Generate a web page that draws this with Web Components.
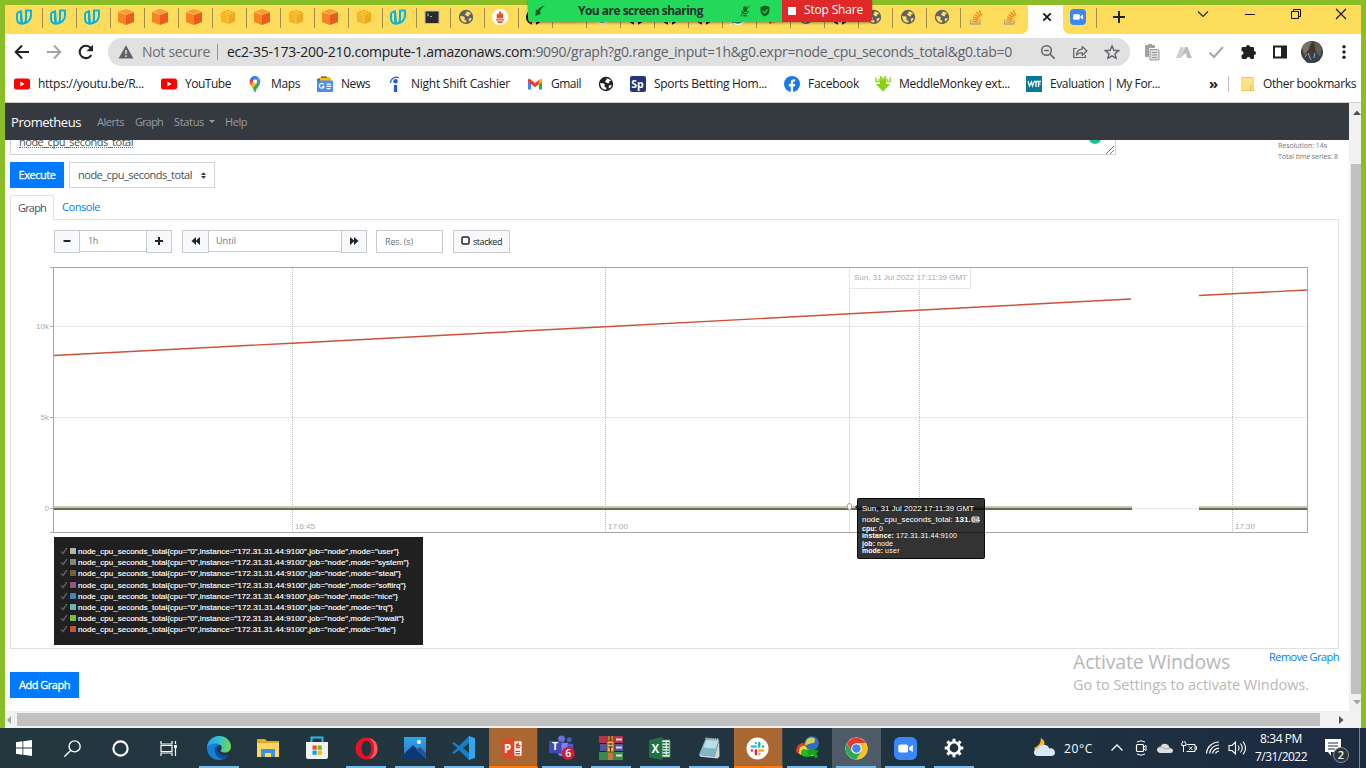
<!DOCTYPE html>
<html lang="en">
<head>
<meta charset="utf-8">
<title>Prometheus Time Series</title>
<style>
body{margin:0;width:1366px;height:768px;overflow:hidden;font-family:"Open Sans","Noto Sans",sans-serif;font-size:12px;color:#212529}
</style>
</head>
<body>
<desktop-screen></desktop-screen>
<script>
const define=(name,css,html,init)=>customElements.define(name,class extends HTMLElement{
  constructor(){super();this.attachShadow({mode:'open'});}
  connectedCallback(){
    if(this.ready)return;this.ready=true;
    const t=document.createElement('template');
    t.innerHTML='<style>:host{display:block;box-sizing:border-box}*{box-sizing:border-box}'+css+'</style>'+(typeof html==='function'?html(this):html);
    this.shadowRoot.append(t.content.cloneNode(true));
    if(init)init(this);
  }
});

/* Text run tracked to a given advance width */
define('fit-text',':host{display:inline-block;white-space:pre;flex:none}span{display:inline-block}','<span><slot></slot></span>',el=>{
  const w=+el.getAttribute('w'),s=el.shadowRoot.querySelector('span');
  const n=el.textContent.length,nat=s.getBoundingClientRect().width;
  if(w&&nat){s.style.letterSpacing=((w-nat)/n)+'px';el.style.width=w+'px';}
});

const svg=(w,h,body)=>[w,h,body];
const cube=(a,b,c)=>`<path fill="${a}" d="M8 0l7.500 2.600-7.500 2.800L.5 2.600z"/><path fill="${b}" d="M0 3l8 3V16L0 13z"/><path fill="${c}" d="M16 3L8 6V16l8-3z"/>`;
const globe=c=>`<circle cx="8" cy="8" r="7.2" fill="${c}"/><path fill="#fff" class="land" d="M2.2 7c2.5.2 4 .3 4.500 1.400.3 1.100-.6 1.200-.2 2.100.6 1.300 1.700.4 2 1.700.1 1-.8 1.300-1.200 1.500A6 6 0 0 1 2.200 7zM8.500 2.400c1.700-.2 4 .9 4.700 2.600-1-.2-1.600-.1-2 .6-.3.700.4 1.200-.4 1.700-1.300.5-1.400-.8-2.700-.8C6.700 6.300 7 5 7.700 4.600c.7-.5.900-.9.800-2.200z M11 9.500l2.600-.8c-.2 1.600-1 2.900-2.200 3.900-.8-.8-.9-1.900-.4-3.100z"/>`;
const yt='<rect x="0" y="2.500" width="16" height="11" rx="2.300" fill="#f00"/><path d="M6.400 5.500v5l4.200-2.500z" fill="#fff"/>';
const zoomI='<rect width="16" height="16" rx="4" fill="#3b87f7"/><rect x="3" y="5.200" width="6.800" height="5.600" rx="1.300" fill="#fff"/><path d="M10.500 7.300l2.600-1.800v5l-2.600-1.800z" fill="#fff"/>';
const slackBits='<g stroke-width="3.300" stroke-linecap="round" fill="none"><path stroke="#36c5f0" d="M8.800 8.300H3.300M8.800 3.300v.1"/><path stroke="#2eb67d" d="M13.300 3.300v5M18.500 8.300v.1"/><path stroke="#ecb22e" d="M13.300 13.500h5.400M13.300 18.600v.1"/><path stroke="#e01e5a" d="M8.800 13.500v5.200M3.300 13.500v.1"/></g>';
const ICONS={
 udacity:svg(16,16,'<path d="M1 4.200v5c0 3.500 2 5.500 4.800 5.500 2.700 0 4.200-1.900 4.200-4.800V1.400h5v5.300c0 4.200-3.600 7.800-9.200 8M6 14.300c-.8-1-1-2-1-3.600V2zM1 4.200L5 2.200" fill="none" stroke="#06b3e3" stroke-width="2" stroke-linejoin="round"/>'),
 cube:svg(16,16,cube('#fb9a3a','#f68422','#e85c1f')),
 box:svg(16,16,'<g transform="translate(.8 .8) scale(.9)">'+cube('#f5a80f','#f5b52e','#edab22')+'<path d="M4.500 1.300l7 2.800M11.500 1.300l-7 2.800M8 6v10" stroke="#ffdd5c" stroke-width=".8"/></g>'),
 term:svg(16,16,'<rect x="1" y="2" width="14" height="12.500" fill="#2a2a2a" stroke="#bbb" stroke-width="1"/><path d="M3 4.500l2 1.300-2 1.300M6 7.500h2" stroke="#ccc" stroke-width=".8" fill="none"/>'),
 globe:svg(16,16,globe('#5f6368')),
 globeb:svg(16,16,globe('#202124')),
 prom:svg(16,16,'<circle cx="8" cy="8" r="8" fill="#fff"/><path fill="#e6522c" d="M8 1.500c1.400 1.800.8 2.500 1.700 3.500.2-.6.2-1.200 0-1.700 1.800 2 2 3.700 1.200 6.200H5.100c-.9-2.400-.5-4.300.6-5.600.2 1 .4 1.300.8 1.600C7.200 4.300 6.900 3.100 8 1.500zM4 10.200h8v1.300H4zM5 12.200h6c0 1-1.200 2-3 2s-3-1-3-2z"/>'),
 git:svg(16,16,'<path fill="#191717" d="M8 0a8 8 0 0 0-2.500 15.600c.4.100.5-.2.500-.4v-2c-2.500.4-3-1-3-1-.4-.9-1-1.200-1-1.200 1.500 0 1.900 1.300 1.900 1.300.7 1 1.700.8 2.200.6l.5-1.100C3.200 11.300 3.300 8 3.300 7.500c0-.9.300-1.600.9-2.200-.3-1-.1-1.900.1-2.100 1 0 2 .8 2.200.9a8 8 0 0 1 3.200 0c1-.8 2-.9 2.200-.9.200.5.300 1.200.1 2 1.700 2.300.5 5.700-2.600 6.200.5.500.6 1 .6 2v1.800c0 .2.100.5.500.4A8 8 0 0 0 8 0z"/>'),
 line:svg(16,16,'<rect x="0" y="12.500" width="16" height="1" fill="#f5b34c"/>'),
 green:svg(16,16,'<circle cx="8" cy="8" r="7.500" fill="#eee"/><circle cx="8" cy="7.800" r="6" fill="#139a63"/>'),
 wa:svg(16,16,'<path d="M0 16l1.200-4A8 8 0 1 1 4 15z" fill="#fff"/><path d="M1.500 14.500l.9-3A6.500 6.500 0 1 1 4.600 13.700z" fill="#25b95c"/><path d="M5 5c0 3 3 6 6 6l.5-1.600-2-1-1 1C7.500 9 6.700 8 6.400 7.200l.9-.9-.8-1.700z" fill="#fff"/>'),
 slack:svg(22,22,slackBits),
 so:svg(16,16,'<path d="M2.500 10.500v4.500h9.500v-4.500" fill="none" stroke="#aaa294" stroke-width="1.300"/><path d="M4.300 12.800h6M4.500 10.600l5.900.6M5.100 8.200l5.700 1.600M6.400 5.500l5 3M8.500 3l4 4.500M11.300 1.200l2.400 5.300" stroke="#f48024" stroke-width="1.200"/>'),
 zoom:svg(16,16,zoomI),
 close:svg(16,16,'<path d="M4.300 4.300l7.400 7.400M11.700 4.300l-7.400 7.400" stroke="#111" stroke-width="1.700"/>'),
 plus:svg(16,16,'<path d="M8 2v12M2 8h12" stroke="#222" stroke-width="2"/>'),
 chev:svg(16,16,'<path d="M3 5.500l5 5 5-5" fill="none" stroke="#222" stroke-width="1.100"/>'),
 min:svg(16,16,'<path d="M3 8.500h10" stroke="#111"/>'),
 max:svg(16,16,'<path d="M3.500 5.500h7v7h-7zM5.500 5.500v-2h7v7h-2" fill="none" stroke="#111"/>'),
 x:svg(16,16,'<path d="M3 3l10 10M13 3L3 13" stroke="#111" stroke-width="1.100"/>'),
 back:svg(16,16,'<path d="M15 8H2M8 1.500L1.700 8 8 14.500" fill="none" stroke="#202124" stroke-width="2"/>'),
 fwd:svg(16,16,'<path d="M1 8h13M8 1.500L14.300 8 8 14.500" fill="none" stroke="#a5a5a5" stroke-width="2"/>'),
 reload:svg(16,16,'<path d="M13.300 11A6.200 6.200 0 1 1 12.700 4" fill="none" stroke="#202124" stroke-width="2.100"/><path d="M15 .8v6.400H8.500z" fill="#202124"/>'),
 warn:svg(16,16,'<path d="M8 1.200L15.500 14.500H.5z" fill="#5f6368"/><path d="M8 6v4M8 11.300v1.600" stroke="#e1e1e1" stroke-width="1.500"/>'),
 mag:svg(16,16,'<circle cx="6.500" cy="6.500" r="4.800" fill="none" stroke="#5f6368" stroke-width="1.500"/><path d="M10 10l4.600 4.600M4.200 6.500h4.600" stroke="#5f6368" stroke-width="1.500"/>'),
 share:svg(16,16,'<path d="M4.500 4.500H1.700v9h11.600V11" fill="none" stroke="#5f6368" stroke-width="1.200"/><path d="M4.500 11c.3-3.600 2-5.500 5.700-5.800V2.500L15 7l-4.800 4.300V8.700C7.500 8.700 6 9.300 4.500 11z" fill="none" stroke="#5f6368" stroke-width="1.200" stroke-linejoin="round"/>'),
 star:svg(16,16,'<path d="M8 1.900l1.900 4.400 4.700.4-3.600 3.100 1.100 4.600L8 11.900l-4.100 2.500L5 9.800 1.400 6.700l4.700-.4z" fill="none" stroke="#5f6368" stroke-width="1.400"/>'),
 paste:svg(18,18,'<path d="M2 2h3V1h4v1h3v3H6v9H2z" fill="#a2a2a2"/><path d="M7 6.500h7.500L16 8v9H7z" fill="#ddd" stroke="#999"/><path d="M9 9.500h5M9 12h5M9 14.500h5" stroke="#999"/>'),
 tent:svg(16,16,'<path d="M0 14L4.500 3h2.500l1 3L5 14z" fill="#cfcfcf"/><path d="M16 14L11.500 3H9L5.500 13l2.500-2.500L10 9l1 5z" fill="#bcbcbc"/>'),
 check:svg(16,16,'<path d="M1.500 8.500l4.500 4.500L15 3" fill="none" stroke="#a7a7a7" stroke-width="2"/>'),
 puzzle:svg(16,16,'<path fill="#202124" d="M6 3a2 2 0 0 1 4 0h3a1 1 0 0 1 1 1v3a2 2 0 0 1 0 4v3a1 1 0 0 1-1 1h-2.500a2 2 0 0 0-4 0H3a1.500 1.500 0 0 1-1.500-1.500v-2.500a2 2 0 0 0 0-4V4.500C1.500 3.500 2 3 3 3z"/>'),
 side:svg(16,16,'<path d="M1 1.500h14v13H1zM3 3.500v9h6v-9z" fill="#202124" fill-rule="evenodd"/>'),
 avatar:svg(22,22,'<circle cx="11" cy="11" r="11" fill="#3b3f3a"/><path d="M1 6Q5 0 11 .2L8 8 3 14z" fill="#77736a"/><path d="M13 1q6 1 8 7l-2 8-5-7z" fill="#5c6155"/><ellipse cx="11.500" cy="7" rx="3" ry="4" fill="#4a3329"/><path d="M5 21l2-9 5-1 5 3 2 5q-7 5-14 2z" fill="#35404c"/><path d="M7 12l3 7M14 12l-1 5M4 16l2-3" stroke="#a3a6a8" stroke-width="1"/>'),
 dots:svg(16,16,'<g fill="#202124"><circle cx="8" cy="2.800" r="1.700"/><circle cx="8" cy="8" r="1.700"/><circle cx="8" cy="13.200" r="1.700"/></g>'),
 yt:svg(16,16,yt),
 maps:svg(16,16,'<path fill="#34a853" d="M3.500 8.500c1.500 2.500 3 3.700 3.700 7 .3.700 1.200.7 1.500 0 .7-3.500 3.500-4.600 4.400-8.500L12 4z"/><path fill="#fbbc04" d="M3.800 9l5.500-6.500L12 5 6.200 12z"/><path fill="#4285f4" d="M5 9.500L11.800 2C13.500 3.300 14 6 12.500 8L8 6z" opacity=".9"/><path fill="#ea4335" d="M3.200 3.500L6 6 2.700 6z"/><path fill="#1a73e8" d="M4 2C5.300.3 7 0 8.500 0L5.500 5 3.500 3z"/><path fill="#4285f4" d="M8 0c2 0 3.300.8 4 2L9 4.500 6 3.500z"/><path fill="#ea4335" d="M3.500 2.600L7 5l-3.500 4C2.600 7 2.200 4.500 3.500 2.600z"/><circle cx="8" cy="5.500" r="2" fill="#fff"/>'),
 news:svg(16,16,'<path fill="#ea4335" d="M4 0l10 2v5H4z"/><path fill="#0c9d58" d="M0 3L9 0l2 5H0z"/><path fill="#fbbc04" d="M3 2h11v5H3z"/><rect y="4.500" width="16" height="11.500" rx="1" fill="#4b8bf5"/><path d="M6.800 8.600A2.400 2.400 0 1 0 7 10.600H5M9.500 8.200h4.500M9.500 10.400h5M9.500 12.600h4" stroke="#fff" stroke-width="1.200" fill="none"/>'),
 night:svg(16,16,'<circle cx="8.500" cy="5.300" r="2.200" fill="#2557d6"/><path d="M8.500 9v7" stroke="#2557d6" stroke-width="3.200"/><path d="M3.500 7C3.700 2 8 .2 12 1.700" fill="none" stroke="#2557d6" stroke-width="1.200"/>'),
 gmail:svg(16,16,'<path d="M1 3.500V13.500h3V6z" fill="#4285f4"/><path d="M15 3.500v10h-3V6z" fill="#34a853"/><path d="M12 4l1-1c1-.6 2 .1 2 1.300v1.500L12 8.200z" fill="#fbbc04"/><path d="M1 4.200C1 3 2 2.300 3 3l5 3.900L12 4v4.300L8 11.300 1 6z" fill="#ea4335"/>'),
 sp:svg(16,16,'<rect width="16" height="16" rx="2" fill="#263577"/><text x="1.300" y="12" fill="#fff" font-family="Open Sans" font-weight="700" font-size="10.500">Sp</text>'),
 fb:svg(16,16,'<circle cx="8" cy="8" r="8" fill="#1877f2"/><path fill="#fff" d="M6.800 16v-5.500H4.800V8.100h2V6.400c0-2 1.100-3.100 2.900-3.100.8 0 1.500.1 1.500.1v2h-.9c-.9 0-1.200.6-1.200 1.200v1.500H11.200l-.4 2.400H9.100V16z"/>'),
 down:svg(16,16,'<path d="M5 0v8H.8L8 15.500 15.200 8H11V0H9.500v2h-3V0z" fill="#8bcf17"/><path d="M5.500 1.500h5v2h-5z" fill="#a8dd45"/><path d="M.8 1.500v4H4v-3M15.200 1.500v4H12v-3" fill="none" stroke="#9bd62b" stroke-width="1.400"/>'),
 wtf:svg(16,16,'<rect width="16" height="16" fill="#077a98"/><path d="M2 5l1.500 5L5.500 6l1 4 2-5M8 5.500h4M10 6v5M15 5.500h-2.500V11M12.500 8.200h2" stroke="#fff" stroke-width="1.300" fill="none"/>'),
 folder:svg(16,16,'<path d="M2 1.500h11v13H2z" fill="#ffe389" stroke="#edc759"/><path d="M10.500 14.500V10h2.500v4.500z" fill="#ffe9a3" stroke="#e8bd47"/>'),
 win:svg(16,16,'<path fill="#fff" d="M0 2.200L6.500 1.300v6.300H0zM7.300 1.200L16 0v7.600H7.300zM0 8.400h6.500v6.300L0 13.800zM7.300 8.400H16V16l-8.700-1.200z"/>'),
 search:svg(16,16,'<circle cx="10" cy="6" r="5.200" fill="none" stroke="#fff" stroke-width="1.300"/><path d="M6.200 9.800L.4 15.600" stroke="#fff" stroke-width="1.400"/>'),
 ring:svg(16,16,'<circle cx="8" cy="8" r="6.700" fill="none" stroke="#fff" stroke-width="2"/>'),
 task:svg(17,17,'<path d="M1 1v3h11V1M1 16v-3h11v3M1 5.500h11v6H1zM15.500 1v3M15.500 8v8" fill="none" stroke="#fff" stroke-width="1.200"/><path d="M14 5h3v3h-3z" fill="#fff"/>'),
 edge:svg(24,24,'<defs><linearGradient id="e"><stop stop-color="#279fe4"/><stop offset=".5" stop-color="#35c1d4"/><stop offset="1" stop-color="#6fdc48"/></linearGradient></defs><path d="M12 0a12 12 0 1 0 0 24q5 0 9-4-5 1-8-1t-3-6q0-3 2-4l10 1q-2-10-10-10z" fill="#1480d8"/><path d="M0 11C1 4 6 0 12 0c7 0 12 5 12 10.500 0 4-3 6-6 6-3.500 0-5-1-4-2.500 2-2.500 0-6.500-4-6.500C6 7 2 8.500 0 11z" fill="url(#e)"/><path d="M9 10c-3 3-1 12 6 13 3-1 5-2 6.500-4-2 .6-5 .4-7-.6-4-2-5.500-5.400-4.500-9z" fill="#104a9d"/>'),
 files:svg(22,20,'<path d="M0 1h8l2 2h12v15H0z" fill="#e9a91b"/><path d="M0 5h22v14H0z" fill="#ffd766"/><path d="M4 11h14v8h-4v-4H8v4H4z" fill="#3c91db"/>'),
 store:svg(24,24,'<path d="M6.500 7V1.500h11V7" fill="none" stroke="#2fb7ea" stroke-width="2"/><path d="M1 6h22v15q0 2-2 2H3q-2 0-2-2z" fill="#f2f2f2"/><path d="M7.500 9.500h4.200v4.200H7.500z" fill="#f25022"/><path d="M12.600 9.500h4.200v4.200h-4.200z" fill="#7fba00"/><path d="M7.500 14.600h4.200v4.200H7.500z" fill="#00a4ef"/><path d="M12.600 14.600h4.200v4.200h-4.200z" fill="#ffb900"/>'),
 opera:svg(24,24,'<path fill-rule="evenodd" fill="#e81224" d="M12 .500a11.500 11.500 0 1 0 0 23 11.500 11.500 0 0 0 0-23zM12 4c3 0 5 3.500 5 8s-2 8-5 8-5-3.500-5-8 2-8 5-8z"/><path d="M15 1q8 2 8.500 11T15 23q5-4 5-11T15 1z" fill="#fa5a5e"/>'),
 photos:svg(22,22,'<defs><linearGradient id="p" x2="0" y2="1"><stop stop-color="#26a8ee"/><stop offset="1" stop-color="#3d6fc0"/></linearGradient></defs><path d="M0 0h22v22H0z" fill="url(#p)"/><path d="M0 17L9 8l13 14H0z" fill="#0d3977"/><path d="M12 13l4-3 6 6v6z" fill="#285199"/><circle cx="15" cy="5" r="2" fill="#fff"/>'),
 code:svg(24,24,'<path d="M17 0l6 2.500v19L17 24 7 14l-5 4-2-1.500L5.500 12 0 7.500 2 6l5 4zM17 7l-6 5 6 5z" fill="#1480cc" fill-rule="evenodd"/><path d="M17 0l6 2.500v19L17 24z" fill="#34a6ee"/>'),
 ppt:svg(24,24,'<path d="M12 4h10v16H12z" fill="#fff" stroke="#d24726"/><path d="M15 15h5M15 17.500h5M16.500 7v4h3.500M18 6v3h2.500" stroke="#d24726" stroke-width="1.500" fill="none"/><path d="M0 3l14-3v24L0 21z" fill="#dc4a2c"/><text x="3" y="16.500" fill="#fff" font-family="Open Sans" font-weight="700" font-size="12">P</text>'),
 teams:svg(28,26,'<circle cx="13" cy="4" r="3.600" fill="#6d73d6"/><circle cx="21" cy="5" r="2.600" fill="#5059c9"/><path d="M7 8h13v10q-4 6-10 3z" fill="#7b83eb"/><path d="M19 9h6v6q-1 4-6 4z" fill="#5059c9"/><path d="M0 6h13v13H0z" fill="#4048b2"/><text x="3" y="16" fill="#fff" font-family="Open Sans" font-weight="700" font-size="11">T</text><circle cx="20" cy="19" r="6.800" fill="#d01c3c"/><text x="16.800" y="23" fill="#fff" font-family="Open Sans" font-weight="600" font-size="11">6</text>'),
 rar:svg(24,24,'<path d="M0 0h24v7H0z" fill="#b6314d"/><path d="M1 8h23v7H1z" fill="#5055a2"/><path d="M0 16h24v8H0z" fill="#388b4d"/><path d="M17 3.500h6M17 11.500h6M17 19.500h6" stroke="#ddd" stroke-width="2"/><path d="M1 7.500h23M0 15.500h24" stroke="#222" stroke-width="1"/><path d="M9 0h5v24H9z" fill="#c37b35"/><path d="M8 5h7v11H8z" fill="#e5bd5d" stroke="#70461d"/><path d="M11.500 0v5M9.500 8h4M9.500 11h4M11.500 12v4" stroke="#633915" stroke-width="1.300"/>'),
 excel:svg(24,24,'<path d="M12 3h10v18H12z" fill="#fff" stroke="#207245"/><path d="M14 6h7M14 9h7M14 12h7M14 15h7M14 18h7" stroke="#207245" stroke-width="1.700"/><path d="M18 4v16" stroke="#fff"/><path d="M0 3l14-3v24L0 21z" fill="#207245"/><text x="2.500" y="16.500" fill="#fff" font-family="Open Sans" font-weight="700" font-size="12">X</text>'),
 note:svg(24,24,'<path d="M8 1.500l14 1-4.500 18L1 18.500z" fill="#7fb5c5"/><path d="M8.500 3l12.500 1-2.500 8-13-1z" fill="#bcdfe6"/><path d="M8 1.300l14 1" stroke="#e5e5e5" stroke-width="1.500" stroke-dasharray="1 1"/><path d="M1 18.500l16.500 2L22 3l.5 17-2 2.500-18-2z" fill="#d6d6d6"/>'),
 slackc:svg(24,24,'<circle cx="12" cy="12" r="11.500" fill="#fff"/><g transform="translate(3.600 3.600) scale(.77)">'+slackBits+'</g>'),
 idm:svg(26,24,'<path d="M1 15q1-8 9-8 7 0 13 13l-6 1Q13 12 9 12q-5 0-4 7-4-1-4-4z" fill="#e53929"/><path d="M4 17q0-7 6-7 6 1 10 10l-4 1q-3-6-6-6-4 0-3 5-3-1-3-3z" fill="#f7df2b"/><path d="M6 18q1-6 5-4 4 2 5 7Q7 23 6 18z" fill="#1bbb2a"/><circle cx="17.500" cy="7.500" r="7.300" fill="#2f6fc0"/><path d="M13 3q4-3 8 0l-1 4-5 1-4 2q-1-4 2-7z" fill="#cfd25a"/><path d="M12 14l13 1-3 3 2 4-3 1-3-4-3 3z" fill="#10a818"/>'),
 chrome:svg(24,24,'<circle cx="12" cy="12" r="11.500" fill="#fff"/><path d="M2 6.500A11.500 11.500 0 0 1 22 6.500H12L7 15z" fill="#e33b2e"/><path d="M22 6.500A11.500 11.500 0 0 1 12 23.500l5-8.500-5-8.500z" fill="#fbc116"/><path d="M12 23.500A11.500 11.500 0 0 1 2 6.500l5 8.500h10z" fill="#2da94f"/><circle cx="12" cy="12" r="5.500" fill="#fff"/><circle cx="12" cy="12" r="4.400" fill="#4285f4"/>'),
 gear:svg(20,20,'<circle cx="10" cy="10" r="5.700" fill="none" stroke="#fff" stroke-width="2.600"/><path d="M10 .7v4M10 15.300v4M.7 10h4M15.300 10h4M3.400 3.400l2.800 2.800M13.800 13.800l2.800 2.800M3.400 16.600l2.800-2.800M13.800 6.200l2.800-2.800" stroke="#fff" stroke-width="3"/>'),
 weather:svg(22,20,'<path d="M7 0q6 3 3 9L2 13Q-1 10 1 10 8 7 7 0z" fill="#ffb61e"/><path d="M4 19a4 4 0 0 1 0-8q2-4 6-4 5 0 6 4 5-1 6 4 0 4-4 4z" fill="#d9e7f6"/>'),
 up:svg(16,16,'<path d="M2.500 10.500L8 5l5.500 5.500" fill="none" stroke="#fff" stroke-width="1.300"/>'),
 meet:svg(16,16,'<rect x="3.500" y="4.500" width="7" height="7" rx="1" fill="none" stroke="#fff" stroke-width="1.200"/><path d="M11 7l2-1.500v5L11 9M4 2q4-2.500 8 0M4 14q4 2.500 8 0" fill="none" stroke="#fff"/>'),
 cloud:svg(16,16,'<path d="M3 13q-3-1-3-3.500T3.500 7Q5 3 9 4q3 .5 3.500 4Q16 8 16 11q0 2-2.500 2z" fill="#ddd"/><path d="M2 7q4-1 6 2l5-1" stroke="#aaa" fill="none"/>'),
 batt:svg(16,16,'<path d="M5.500 4.500H14v7H5.500M14.500 6.500h1v3h-1M8 6.500l3.500 3.500M11.500 6.500L8 10M2.500 6v6M.8 3v2.500h4V3M1.700 1v2M4 1v2" fill="none" stroke="#fff"/>'),
 wifi:svg(16,16,'<path d="M1.500 13.500A12.500 12.500 0 0 1 14 2M4.500 13.500A9.500 9.500 0 0 1 14 5M7.500 13.500A6 6 0 0 1 14 8.500M10.500 13.500q.5-2 3.500-2.500" fill="none" stroke="#fff" stroke-width="1.200"/>'),
 vol:svg(18,16,'<path d="M1 5.500h3L7.500 2v12L4 10.500H1zM10 5.500q2 2.500 0 5M12.500 3.500q3.500 4.500 0 9M15 1.500q5 6.500 0 13" fill="none" stroke="#fff" stroke-width="1.100"/>'),
 notif:svg(24,24,'<path d="M0 0h16v13H6v4l-3-4H0z" fill="#fff"/><path d="M3 4h10M3 7h10M3 10h7" stroke="#203040" stroke-width="1.200"/><circle cx="16" cy="16" r="7.500" fill="#2d3339" stroke="#899"/><text x="12.700" y="20" font-family="Open Sans" font-size="11" font-weight="600" fill="#fff">2</text>'),
 pull:svg(16,16,'<path d="M15 1Q7 2 5 7L2.500 6 2 15l8-4-2.500-1.500Q9 4 15 1z" fill="#0b5d20"/>'),
 mic:svg(16,16,'<rect x="5.500" y="1.500" width="5" height="8" rx="2.500" fill="#0b5d20"/><path d="M3.500 7.500q0 4 4.500 4t4.500-4M8 11.500V14M5 14.500h6M14 1L2 15" fill="none" stroke="#0b5d20" stroke-width="1.300"/>'),
 shield:svg(16,16,'<path d="M8 .8l6 2v5q0 5-6 7.500-6-2.500-6-7.500v-5z" fill="#0b5d20"/><path d="M5 8l2.500 2.500L11.500 6" stroke="#23d959" stroke-width="1.600" fill="none"/>')
};
define('ui-icon',':host{display:inline-flex;flex:none}svg{display:block}.land{fill:var(--land,#fff)}',el=>{
  const [w,h,b]=ICONS[el.getAttribute('n')],s=+el.getAttribute('s')||w;
  return `<svg width="${s}" height="${s*h/w}" viewBox="0 0 ${w} ${h}">${b}</svg>`;
});

const T=(w,t,c='')=>`<fit-text w="${w}" style="${c}">${t}</fit-text>`;
const I=(n,s='',c='')=>`<ui-icon n="${n}" s="${s}" style="${c}"></ui-icon>`;

const tabIcons=['udacity','udacity','udacity','cube','cube','cube','box','cube','box','cube','box','udacity','term','globe','prom','git','line','green','git','git','git','wa','slack','globe','git','globe','globe','globe','so','so'];
define('tab-strip',`:host{display:flex;height:29px;background:#ffdd5c;padding-left:3px;--land:#ffdd5c}
.t{width:34px;height:29px;padding:4px 0 0 8px;position:relative}
.t:not(.last):after{content:"";position:absolute;right:-1px;top:3px;width:1px;height:20px;background:#a08f4e}
.t.last{border-bottom-right-radius:7px;background:#ffdd5c}
.a{width:35px;background:#fff;display:flex;padding:4px 0 0 11px}
.edge{background:#fff;display:flex}
.z{width:34px;padding:4px 0 0 7px;border-bottom-left-radius:7px;background:#ffdd5c;height:29px;position:relative}
.z:after{content:"";position:absolute;right:0;top:3px;width:1px;height:20px;background:#a08f4e}
.w{display:flex;margin-left:auto}.w ui-icon{width:46px;justify-content:center;padding-top:1px}`,
 `${tabIcons.slice(0,29).map(n=>`<div class="t">${I(n,16)}</div>`).join('')}
 <div class="edge"><div class="t last">${I('so',16)}</div><div class="a">${I('close',16)}</div><div class="z">${I('zoom',16)}</div></div>${I('plus','','padding:4px 0 0 14px')}
 <div class="w">${I('chev','','position:relative;left:-4px')}${I('min','','position:relative;left:-3px')}${I('max','','position:relative;left:-3px')}${I('x','','width:39px;padding-right:2px')}</div>`);

define('tool-bar',`:host{display:flex;height:36px;background:#fff;align-items:center;padding-left:9px;font-size:14px;color:#202124}
.n{display:flex;gap:16px}.o{display:flex;align-items:center;width:1022px;height:28px;border-radius:14px;background:#e1e1e1;margin-left:14px;padding-left:10px;--lift:-1px}
.o fit-text{position:relative;top:-.5px}
.s{width:1px;height:16px;background:#969696;margin:0 9px 0 7px}.r{display:flex;gap:16px;margin-left:auto;padding-right:10px}
.e{display:flex;align-items:center}.e ui-icon{width:32px;justify-content:center}`,
 `<div class="n">${I('back')}${I('fwd')}${I('reload')}</div>
 <div class="o">${I('warn')}${T(68,'Not secure','margin-left:8px;color:#6a6d70')}<i class="s"></i>${T(305,'ec2-35-173-200-210.compute-1.amazonaws.com')}${T(480,':9090/graph?g0.range_input=1h&amp;g0.expr=node_cpu_seconds_total&amp;g0.tab=0','color:#5f6368')}
 <div class="r">${I('mag')}${I('share')}${I('star')}</div></div>
 <div class="e" style="margin-left:6px">${['paste','tent','check','puzzle','side','avatar','dots'].map(n=>I(n)).join('')}</div>`);

const marks=[['yt',147,106,'https://youtu.be/R...'],['yt',86,46,'YouTube'],['maps',70,29,'Maps'],['news',70,29,'News'],['night',140,99,'Night Shift Cashier'],['gmail',71,30,'Gmail'],['globeb',32,0,''],['sp',154,113,'Sports Betting Hom...'],['fb',91,51,'Facebook'],['down',151,111,'MeddleMonkey ext...'],['wtf',183,110,'Evaluation | My For...']];
define('bookmark-bar',`:host{display:flex;height:33px;background:#fff;align-items:center;padding:0 0 4px 9px;border-bottom:1px solid #cfcfcf;font-size:12px;color:#202124}
.b{display:flex;align-items:center;gap:8px}.b fit-text{margin-top:-1px}.s{width:1px;height:16px;background:#bbb;margin:0 11px 0 10px}`,
 marks.map(m=>`<div class="b" style="width:${m[1]}px">${I(m[0])}${m[3]?T(m[2],m[3]):''}</div>`).join('')
 +T(9,'»','font-weight:700;font-size:15px;margin-top:-3px')+`<i class="s"></i><div class="b" style="gap:7px">${I('folder')}${T(93,'Other bookmarks')}</div>`);

define('share-banner',`:host{position:absolute;left:528px;top:0;display:flex;width:344px;height:22px;border-radius:0 0 4px 4px;overflow:hidden;background:#23d959;box-shadow:0 1px 3px #0006;font-size:12px;align-items:center;color:#24332d}
.r{margin-left:auto;width:90px;height:22px;background:#e02828;color:#fff;display:flex;align-items:center;padding-left:6px;gap:8px}.q{width:8px;height:8px;background:#fff;margin-top:-1px}`,
 `${I('pull',12,'margin-left:6px')}${T(125,'You are screen sharing','font-weight:700;margin:-2px 0 0 32px')}${I('mic',12,'margin-left:36px')}${I('shield',12,'margin-left:8px')}<div class="r"><i class="q"></i>${T(59,'Stop Share','margin-top:-3px')}</div>`);

define('prom-navbar',`:host{display:flex;height:37px;background:#343a40;align-items:center;padding:0 0 0 6px;color:#9a9da0;font-size:11px}
.c{border:3px solid transparent;border-top-color:#9a9da0;border-bottom:0;margin-left:5px}`,
 `${T(70,'Prometheus','color:#fff;font-size:13px')}${T(27,'Alerts','margin-left:16px')}${T(28,'Graph','margin-left:11px')}${T(30,'Status','margin-left:11px')}<i class="c"></i>${T(22,'Help','margin-left:10px')}`);

define('query-form',`:host{display:block;color:#495057;font-size:11px}
.top{display:flex;height:15px;overflow:hidden}
.ta{width:1106px;height:15px;border:1px solid #ced4da;border-top:0;position:relative;padding-left:8px;display:flex;align-items:flex-start}
.ta fit-text{margin-top:-6px;line-height:15px;height:14px;border-bottom:1px dotted #e33}
.dot{position:absolute;left:1078px;top:-8px;width:12px;height:12px;border-radius:50%;background:#15c39a}
.gr{position:absolute;right:1px;bottom:0}
.row{display:flex;margin-top:7px;gap:5px}
.b{background:#007bff;color:#fff;height:26px;width:54px;display:flex;align-items:center;justify-content:center;padding-bottom:1px;-webkit-text-stroke:.3px}
.s{width:146px;height:26px;border:1px solid #ced4da;display:flex;align-items:center;justify-content:space-between;padding:0 8px 1px}.s svg{margin-top:1px}`,
 `<div class="top"><div class="ta">${T(114,'node_cpu_seconds_total')}<i class="dot"></i><svg class="gr" width="9" height="9"><path d="M1 9L9 1M5 9l4-4" stroke="#777"/></svg></div></div>
 <div class="row"><div class="b">${T(37,'Execute')}</div><div class="s">${T(114,'node_cpu_seconds_total')}<svg width="5" height="7" viewBox="0 0 6 8"><path d="M0 3.300L3 0l3 3.300zM0 4.700h6L3 8z" fill="#343a40"/></svg></div></div>`);

define('graph-controls',`:host{display:flex;height:23px;font-size:9px;color:#6c757d}
.b{width:26px;height:23px;border:1px solid #c8ccd0;background:#f8f9fa;display:flex;align-items:center;justify-content:center;padding-bottom:1px}
.i{height:22px;border:1px solid #c8ccd0;display:flex;align-items:center;padding:0 0 1px 8px;margin:0 -1px}`,
 (()=>{const s=p=>`<svg width="10" height="10" viewBox="0 0 10 10"><path d="${p}" fill="#212529"/></svg>`;
 return `<div class="b">${s('M1.500 4h7v2h-7z')}</div><div class="i" style="width:68px">${T(10,'1h')}</div><div class="b">${s('M1 4h3V1h2v3h3v2H6v3H4V6H1z')}</div>
 <div class="b" style="margin-left:10px;width:27px">${s('M5 1v3.500L9 1v8L5 5.500V9L.5 5z')}</div><div class="i" style="width:134px;padding-left:7px">${T(20,'Until')}</div><div class="b" style="width:26px">${s('M5 1v3.500L1 1v8l4-3.500V9l4.500-4z')}</div>
 <div class="i" style="width:67px;margin:0 10px 0 9px;height:23px">${T(28,'Res. (s)')}</div><div class="b" style="width:57px;gap:3px;color:#212529"><svg width="9" height="9" style="margin-top:-1px"><rect x="1" y="1" width="7" height="7" rx="1.500" fill="none" stroke="#212529" stroke-width="1.500"/></svg>${T(29,'stacked')}</div>`})());

const gx=[292.5,605.5,919.5,1232.5],gl=['16:45','17:00','17:15','17:30'];
define('time-chart',':host{display:block;height:275px}svg{display:block}text{font-family:"Liberation Sans",Arial,sans-serif;font-size:8px;fill:#aaa}',
 `<svg width="1328" height="275" viewBox="11 262 1328 275">
 <path d="M54 326.500h1253M54 417.500h1253M54 508.500h1253" stroke="#e2e2e2" stroke-dasharray="3 1"/>
 <path d="${gx.map(x=>`M${x} 268v264`).join('')}" stroke="#bbb" stroke-dasharray="1 1"/>
 <path d="M50 267.500h1257.500v265M50 532.500h1258M53.500 267v266M50 326.500h3M50 417.500h3M50 508.500h3" fill="none" stroke="#a6a6a6"/>
 ${gx.map((x,i)=>`<text x="${x+2.500}" y="529" textLength="20">${gl[i]}</text>`).join('')}
 <text x="49" y="329" text-anchor="end">10k</text><text x="49" y="420" text-anchor="end">5k</text><text x="49" y="511" text-anchor="end">0</text>
 <path d="M849.500 268v264" stroke="#ddd"/><path d="M849.500 268v20.500H970.500V268" fill="#fff9" stroke="#e7e7e7"/><text x="854" y="280" textLength="113">Sun, 31 Jul 2022 17:11:39 GMT</text>
 <path d="M54 507h1078M1199 507h108" stroke="#c8c8b9" stroke-width="2"/><path d="M54 509h1078M1199 509h108" stroke="#6d6c51" stroke-width="2"/>
 <path d="M54 355.500L292 343.200 605 326.700 850 313.800 1131 299M1199 295.500L1307 290" fill="none" stroke="#cb513a" stroke-width="1.400"/>
 <rect x="847.500" y="503.500" width="4" height="6" rx="2" fill="#fff" stroke="#999"/></svg>`);

define('chart-tooltip',`:host{position:absolute;left:857px;top:498px;width:128px;height:61px;background:#000c;border:1px solid #000c;border-radius:2px;color:#fff;font-family:"Liberation Sans",Arial,sans-serif;font-size:7px;padding:3px 0 0 4px;line-height:7.3px}
div{display:flex}.l{font-size:8px;height:12px;line-height:13px}.d{position:absolute;left:-3px;top:5px;border:3px solid transparent;border-right-color:#111;border-left:0}.sw{position:absolute;left:114px;top:17px;width:7px;height:7px;background:#bdbeb299}`,
 `<i class="d"></i><div class="l">${T(112,'Sun, 31 Jul 2022 17:11:39 GMT')}</div><div class="l" style="height:11px;line-height:11px">${T(93,'node_cpu_seconds_total: ')}${T(25,'131.04','font-weight:700')}</div><i class="sw"></i>
 ${[['cpu','0',15,4],['instance','172.31.31.44:9100',32,61],['job','node',13,16],['mode','user',21,15]].map(r=>`<div>${T(r[2],r[0]+':','font-weight:700')}${T(r[3],r[1],'margin-left:2px')}</div>`).join('')}`);

const series=[['user',321,'#b7b6a5'],['system',331,'#858772'],['steal',323,'#785d43'],['softirq',328,'#96557e'],['nice',320,'#4682b4'],['irq',315,'#65b9ac'],['iowait',326,'#73c03a'],['idle',318,'#cb513a']];
define('chart-legend',`:host{display:block;width:369px;height:108px;background:#202020;padding:9px 0 0 6px;color:#fff;font-family:"Liberation Sans",Arial,sans-serif;font-size:8px}
.r{display:flex;height:11.2px;align-items:center}.s{width:6px;height:6px;margin:-1px 2px 0;box-shadow:0 0 0 .5px #0005}fit-text{-webkit-text-stroke:.15px #fff}svg{margin-top:-1px}`,
 series.map(s=>`<div class="r"><svg width="8" height="8"><path d="M1 4.500l2 2L7 1" fill="none" stroke="#5b5b5b" stroke-width="1.500"/></svg><i class="s" style="background:${s[2]}"></i>${T(s[1],`node_cpu_seconds_total{cpu="0",instance="172.31.31.44:9100",job="node",mode="${s[0]}"}`)}</div>`).join(''));

define('graph-panel',`:host{display:block;font-size:11px}
.t{display:flex;height:25px;align-items:stretch;margin-bottom:-1px;position:relative}.t>*{display:flex;align-items:center;padding-bottom:2px}
.a{width:44px;border:1px solid #dee2e6;border-bottom:0;background:#fff;justify-content:center;border-radius:2px 2px 0 0;color:#495057}.c{color:#007bff;padding-left:8px}
.p{width:1329px;height:430px;border:1px solid #dee2e6;padding-top:10px}.p graph-controls{margin-left:43px}.p time-chart{margin-top:9px}.p chart-legend{margin-left:43px}`,
 `<div class="t"><div class="a">${T(28,'Graph')}</div><div class="c">${T(38,'Console')}</div></div>
 <div class="p"><graph-controls></graph-controls><time-chart></time-chart><chart-legend></chart-legend></div>`);

define('prom-page',`:host{display:block;width:1344px;height:608px;background:#fff;overflow:hidden}
.m{padding-left:5px}.st{position:absolute;left:1278px;top:140px;font-size:7px;line-height:11px;color:#6c757d}
graph-panel{margin-top:7px}.rm{display:flex;justify-content:flex-end;width:1329px;font-size:11px;color:#007bff;height:23px;line-height:15px}
.b{width:69px;height:26px;background:#007bff;color:#fff;font-size:11px;display:flex;align-items:center;justify-content:center;padding-bottom:1px;-webkit-text-stroke:.3px}`,
 `<prom-navbar></prom-navbar><div class="m"><query-form></query-form><graph-panel></graph-panel><div class="rm">${T(70,'Remove Graph')}</div><div class="b">${T(51,'Add Graph')}</div></div>
 <div class="st">${T(49,'Resolution: 14s')}<br>${T(60,'Total time series: 8')}</div>`);

define('scroll-bar',`:host{display:flex;background:#f1f1f1}:host([v]){width:12px;height:608px;flex-direction:column;align-items:flex-end;padding-top:5px}
:host([h]){height:17px;align-items:center;padding-left:2px}
:host([v]) .th{width:10px;height:530px;background:#c1c1c1;margin:48px 0 5px}:host([h]) .th{width:1303px;height:13px;background:#c1c1c1;margin:0 19px 0 6px}svg{flex:none}`,
 el=>el.hasAttribute('v')?`<svg width="9" height="8"><path d="M1 7l4-4.500L9 7z" fill="#505050"/></svg><div class="th"></div><svg width="9" height="8"><path d="M1 1h8L5 5.500z" fill="#a3a3a3"/></svg>`
 :`<svg width="4" height="8"><path d="M4 0v8L0 4z" fill="#a3a3a3"/></svg><div class="th"></div><svg width="5" height="8"><path d="M0 0v8l4.500-4z" fill="#505050"/></svg>`);

define('activate-note',`:host{position:absolute;left:1073px;top:648px;color:#b7b7b7}div{display:flex}`,
 `<div style="font-size:19.500px;line-height:27px">${T(157,'Activate Windows')}</div><div style="font-size:14.500px;line-height:20px">${T(236,'Go to Settings to activate Windows.')}</div>`);

const apps=[['edge',24,1],['files',22,0],['store',24,0],['opera',23,1],['photos',22,1],['code',24,1],['ppt',23,2],['teams',27,1],['rar',24,1],['excel',23,1],['note',23,1],['slackc',23,2],['idm',25,1],['chrome',23,3],['zoom',23,1],['gear',20,1]];
define('task-bar',`:host{display:flex;height:40px;background:linear-gradient(90deg,#23373f,#22353f 50%,#1d3241 75%,#1e2a40);color:#fff;font-size:12px}
.s{width:48px;display:flex;align-items:center;justify-content:center}
.a{width:49px;display:flex;align-items:center;justify-content:center;position:relative}.a ui-icon{margin-left:-1px}.a[k="1"]:after,.a[k="3"]:after{content:"";position:absolute;bottom:0;left:4px;width:40px;height:2px;background:#76b9ed}
.a[k="2"]{background:#a96731;border-bottom:2px solid #ff7b0b;border-right:1px solid #3d464b}.a[k="2"] ui-icon{margin-bottom:-2px}.a[k="3"]{background:#4d5c66}
.tray{display:flex;align-items:center;margin-left:auto;position:relative;width:333px}.tray ui-icon{width:24px;justify-content:center}
.clock{display:flex;flex-direction:column;align-items:center;width:54px;line-height:18px;margin-left:5px}.end{width:1px;height:40px;background:#75808a;margin-left:10px}`,
 `${[['win',16],['search',17],['ring',17],['task',17]].map(a=>`<div class="s">${I(a[0],a[1])}</div>`).join('')}<div style="width:3px"></div>
 ${apps.map(a=>`<div class="a" k="${a[2]}">${I(a[0],a[1])}</div>`).join('')}
 <div class="tray">${I('weather',21,'width:22px')}${T(29,'20°C','margin:0 12px 0 9px')}${['up','meet','cloud','batt','wifi','vol'].map(n=>I(n)).join('')}<div class="clock">${T(42,'8:34 PM')}${T(52,'7/31/2022')}</div>${I('notif','','margin-left:17px;padding-top:5px')}<i class="end"></i></div>`);

define('desktop-screen',`:host{display:block;width:1366px;height:768px;background:#8bbd26;position:relative;overflow:hidden}
.w{margin:0 5px;padding-top:5px;height:728px}.b{display:flex}`,
 `<div class="w"><tab-strip></tab-strip><tool-bar></tool-bar><bookmark-bar></bookmark-bar><div class="b"><prom-page></prom-page><scroll-bar v></scroll-bar></div><scroll-bar h></scroll-bar></div>
 <task-bar></task-bar><share-banner></share-banner><chart-tooltip></chart-tooltip><activate-note></activate-note>`);
</script>
</body>
</html>
